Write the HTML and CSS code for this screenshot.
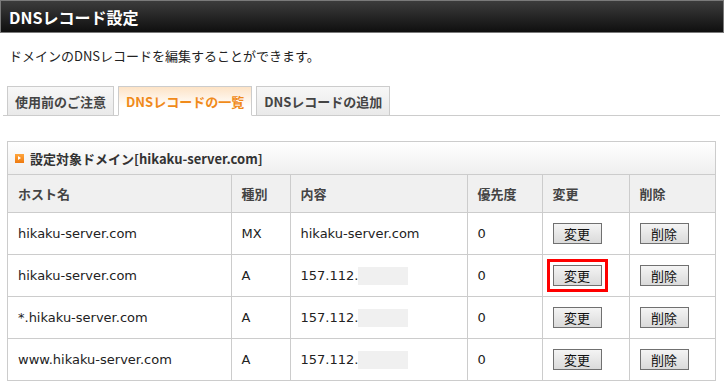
FILE: index.html
```html
<!DOCTYPE html>
<html lang="ja">
<head>
    <meta charset="UTF-8">
    <title>DNSレコード設定</title>
    <link rel="stylesheet" href="styles.css">
</head>
<body>
    <div class="titlebar">
        <h1>DNSレコード設定</h1>
    </div>
    <p class="lead">ドメインのDNSレコードを編集することができます。</p>

    <ul class="tabs">
        <li class="tab">使用前のご注意</li>
        <li class="tab active">DNSレコードの一覧</li>
        <li class="tab">DNSレコードの追加</li>
    </ul>

    <div class="panel">
        <div class="panel-head">
            <span class="mark"></span>設定対象ドメイン[hikaku-server.com]
        </div>
        <table class="records">
            <colgroup>
                <col class="c-host">
                <col class="c-type">
                <col class="c-value">
                <col class="c-prio">
                <col class="c-edit">
                <col class="c-del">
            </colgroup>
            <tr>
                <th>ホスト名</th>
                <th>種別</th>
                <th>内容</th>
                <th>優先度</th>
                <th>変更</th>
                <th>削除</th>
            </tr>
            <tr>
                <td>hikaku-server.com</td>
                <td>MX</td>
                <td>hikaku-server.com</td>
                <td>0</td>
                <td><button class="btn">変更</button></td>
                <td><button class="btn">削除</button></td>
            </tr>
            <tr>
                <td>hikaku-server.com</td>
                <td>A</td>
                <td>157.112.<span class="masked"></span></td>
                <td>0</td>
                <td><button class="btn marked">変更</button></td>
                <td><button class="btn">削除</button></td>
            </tr>
            <tr>
                <td>*.hikaku-server.com</td>
                <td>A</td>
                <td>157.112.<span class="masked"></span></td>
                <td>0</td>
                <td><button class="btn">変更</button></td>
                <td><button class="btn">削除</button></td>
            </tr>
            <tr>
                <td>www.hikaku-server.com</td>
                <td>A</td>
                <td>157.112.<span class="masked"></span></td>
                <td>0</td>
                <td><button class="btn">変更</button></td>
                <td><button class="btn">削除</button></td>
            </tr>
        </table>
    </div>
</body>
</html>
```

FILE: styles.css
```css
body {
    margin: 0;
    font-family: "DejaVu Sans", "Noto Sans CJK JP", sans-serif;
    font-size: 13px;
    color: #222;
    background: #fff;
}
.titlebar {
    height: 31px;
    border: 1px solid #7a7a7a;
    background: linear-gradient(#3c3c3c, #0f0f0f);
    display: flex;
    align-items: center;
}
.titlebar h1 {
    margin: 0 0 0 8px;
    font-family: "Noto Sans CJK JP", sans-serif;
    font-size: 16px;
    font-weight: bold;
    color: #fff;
}
.lead {
    margin: 0;
    padding: 13px 9px 0;
    height: 32px;
    line-height: 20px;
    font-family: "Noto Sans CJK JP", sans-serif;
}
.tabs {
    list-style: none;
    display: flex;
    gap: 4px;
    margin: 8px 4px 0 3px;
    padding: 0 0 0 4px;
    border-bottom: 1px solid #cccccc;
}
.tab {
    height: 28px;
    padding: 0 7px;
    margin-bottom: -1px;
    border: 1px solid #cccccc;
    background: linear-gradient(#f7f7f7, #e9e9e9);
    display: flex;
    align-items: center;
    justify-content: center;
    font-family: "Noto Sans CJK JP", sans-serif;
    font-weight: bold;
    color: #444;
}
.tab.active {
    color: #f08a1a;
    background: linear-gradient(#fde3c6, #ffffff 70%);
    border-bottom-color: #fff;
}
.panel {
    margin: 25px 8px 0 7px;
    border: 1px solid #cccccc;
}
.panel-head {
    height: 32px;
    display: flex;
    align-items: center;
    padding-left: 7px;
    background: linear-gradient(#ffffff, #efefef);
    font-family: "Noto Sans CJK JP", sans-serif;
    font-weight: bold;
    color: #333;
}
.mark {
    width: 9px;
    height: 9px;
    margin-right: 6px;
    background: linear-gradient(#ffa53c, #ee7a10);
    position: relative;
}
.mark::after {
    content: "";
    position: absolute;
    left: 3px;
    top: 2px;
    border-left: 3px solid #fff;
    border-top: 2.5px solid transparent;
    border-bottom: 2.5px solid transparent;
}
.records {
    width: 100%;
    border-collapse: collapse;
}
.c-host { width: 223px; }
.c-type { width: 59px; }
.c-value { width: 177px; }
.c-prio { width: 75px; }
.c-edit { width: 87px; }
.records th,
.records td {
    border: 1px solid #cccccc;
    padding: 0 0 0 10px;
    text-align: left;
}
.records tr > :first-child { border-left: none; }
.records tr > :last-child { border-right: none; }
.records tr:last-child td { border-bottom: none; }
.records th {
    height: 37px;
    background: #f0f0f0;
    font-family: "Noto Sans CJK JP", sans-serif;
    font-weight: bold;
    color: #444;
}
.records td {
    height: 41px;
}
.masked {
    display: inline-block;
    width: 50px;
    height: 18px;
    background: #f0f0f0;
    vertical-align: middle;
}
.btn {
    width: 49px;
    height: 21px;
    padding: 0;
    border: 1px solid #707070;
    background: linear-gradient(#f4f4f4, #dadada);
    font-family: "Noto Sans CJK JP", sans-serif;
    font-size: 13px;
    color: #111;
    vertical-align: middle;
}
.btn.marked {
    outline: 3px solid #ff0000;
    outline-offset: 3px;
}
```
